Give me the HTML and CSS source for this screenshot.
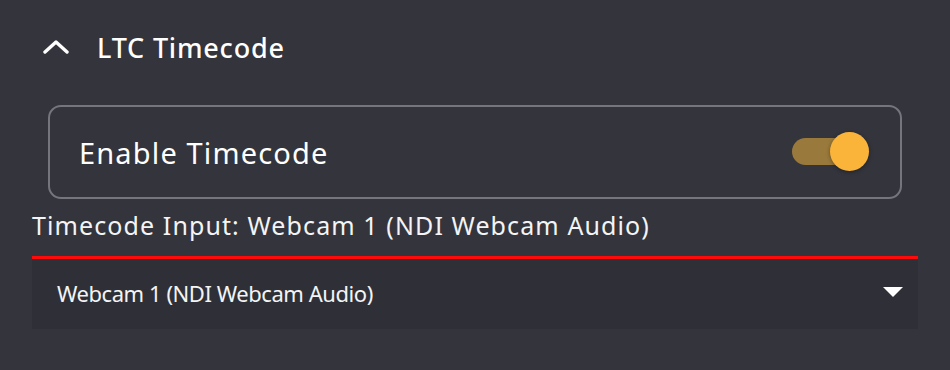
FILE: index.html
```html
<!DOCTYPE html>
<html>
<head>
<meta charset="utf-8">
<link rel="stylesheet" href="styles.css">
</head>
<body>
<div class="panel">
  <div class="section-header">
    <svg class="chevron" width="26" height="16" viewBox="0 0 26 16"><path d="M2 13 L13 3 L24 13" fill="none" stroke="#ffffff" stroke-width="3.4" stroke-linecap="round" stroke-linejoin="round"/></svg>
    <span class="section-title">LTC Timecode</span>
  </div>
  <div class="card">
    <span class="card-label">Enable Timecode</span>
    <div class="switch">
      <div class="switch-track"></div>
      <div class="switch-knob"></div>
    </div>
  </div>
  <div class="field">
    <div class="field-label">Timecode Input: Webcam 1 (NDI Webcam Audio)</div>
    <div class="select">
      <span class="select-value">Webcam 1 (NDI Webcam Audio)</span>
      <svg class="caret" width="20" height="10" viewBox="0 0 20 10"><path d="M0 0 L20 0 L10 10 Z" fill="#ffffff"/></svg>
    </div>
  </div>
</div>
</body>
</html>
```
FILE: styles.css
```css
html, body {
  margin: 0;
  padding: 0;
  background: #33343c;
  width: 950px;
  height: 370px;
  overflow: hidden;
}
.panel {
  font-family: "Noto Sans", "Open Sans", sans-serif;
  color: #ffffff;
  padding-top: 26px;
}
.section-header {
  display: flex;
  align-items: center;
  padding-left: 43px;
  height: 44px;
}
.chevron {
  display: block;
  margin-top: -2px;
}
.section-title {
  margin-left: 28px;
  font-size: 27px;
  font-weight: 500;
  letter-spacing: 0.8px;
  line-height: 44px;
}
.card {
  margin: 35px 0 0 48px;
  height: 90px;
  border: 2px solid #75767d;
  border-radius: 13px;
  display: flex;
  align-items: center;
  justify-content: space-between;
  padding: 0 30px 0 29px;
  box-sizing: content-box;
  width: 791px;
}
.card-label {
  font-size: 29px;
  font-weight: 400;
  letter-spacing: 1.15px;
}
.switch {
  position: relative;
  width: 78px;
  height: 40px;
}
.switch-track {
  position: absolute;
  left: 0;
  top: 6px;
  width: 58px;
  height: 27px;
  border-radius: 14px;
  background: #9a7a3c;
}
.switch-knob {
  position: absolute;
  left: 38px;
  top: 0;
  width: 39px;
  height: 39px;
  border-radius: 50%;
  background: #fbb43a;
  box-shadow: 0 1px 4px rgba(0,0,0,0.35);
}
.field {
  margin: 9px 0 0 32px;
  width: 886px;
}
.field-label {
  font-size: 25px;
  line-height: 34px;
  letter-spacing: 1.1px;
  color: #f4f4f6;
}
.select {
  margin-top: 14px;
  border-top: 3px solid #ff0a0a;
  background: #2f3037;
  height: 70px;
  display: flex;
  align-items: center;
  justify-content: space-between;
  padding: 0 15px 0 25px;
}
.select-value {
  font-size: 22px;
  letter-spacing: -0.45px;
  color: #f4f4f6;
  margin-top: -2px;
}
.caret {
  display: block;
  margin-top: -4px;
}
```
